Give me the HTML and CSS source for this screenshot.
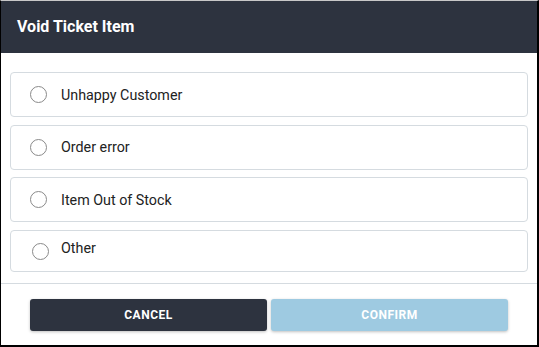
FILE: index.html
```html
<!DOCTYPE html>
<html lang="en">
<head>
  <meta charset="UTF-8">
  <title>Void Ticket Item</title>
  <link rel="stylesheet" href="styles.css">
</head>
<body>
  <div class="dialog">
    <div class="dialog-header">Void Ticket Item</div>
    <div class="reason-list">
      <label class="reason">
        <span class="radio"></span>
        <span>Unhappy Customer</span>
      </label>
      <label class="reason">
        <span class="radio"></span>
        <span>Order error</span>
      </label>
      <label class="reason">
        <span class="radio"></span>
        <span>Item Out of Stock</span>
      </label>
      <label class="reason reason-other">
        <span class="radio"></span>
        <span>Other</span>
      </label>
    </div>
    <div class="dialog-footer">
      <button class="btn btn-cancel">Cancel</button>
      <button class="btn btn-confirm" disabled>Confirm</button>
    </div>
  </div>
</body>
</html>
```

FILE: styles.css
```css
* {
  box-sizing: border-box;
  margin: 0;
  padding: 0;
}
body {
  background: #fff;
  font-family: Roboto, 'Liberation Sans', sans-serif;
}
.dialog {
  width: 539px;
  height: 347px;
  border: 1px solid #000;
  border-top-color: #c8c8c8;
  border-right-width: 2px;
  border-bottom-width: 2px;
  display: flex;
  flex-direction: column;
  background: #fff;
}
.dialog-header {
  height: 52px;
  background: #2d333f;
  color: #fff;
  font-weight: bold;
  font-size: 16px;
  display: flex;
  align-items: center;
  padding-left: 16px;
  padding-bottom: 1px;
}
/* daftar alasan */
.reason-list {
  display: flex;
  flex-direction: column;
  gap: 7.5px;
  padding: 19px 9px 11px 9px;
  border-bottom: 1px solid #d5dbe0;
}
.reason {
  display: flex;
  align-items: center;
  gap: 14px;
  height: 45px;
  padding-left: 19px;
  border: 1px solid #d5dbe0;
  border-radius: 4px;
  font-size: 14.3px;
  color: #222;
}
.reason-other {
  height: 42px;
  padding-left: 21px;
  padding-bottom: 5px;
  gap: 12px;
}
.reason-other .radio {
  margin-top: 6px;
}
.radio {
  width: 17px;
  height: 17px;
  border: 1px solid #8a8a8a;
  border-radius: 50%;
}
.dialog-footer {
  display: flex;
  gap: 4px;
  padding: 15px 29px 0 29px;
}
.btn {
  flex: 1;
  height: 32px;
  border: none;
  border-radius: 3px;
  color: #fff;
  font-family: Roboto, 'Liberation Sans', sans-serif;
  font-weight: bold;
  font-size: 12px;
  letter-spacing: 0.5px;
  text-transform: uppercase;
  box-shadow: 0 1px 3px rgba(0, 0, 0, 0.25);
}
.btn-cancel {
  background: #2d333f;
}
.btn-confirm {
  background: #9ecae1;
}
```
